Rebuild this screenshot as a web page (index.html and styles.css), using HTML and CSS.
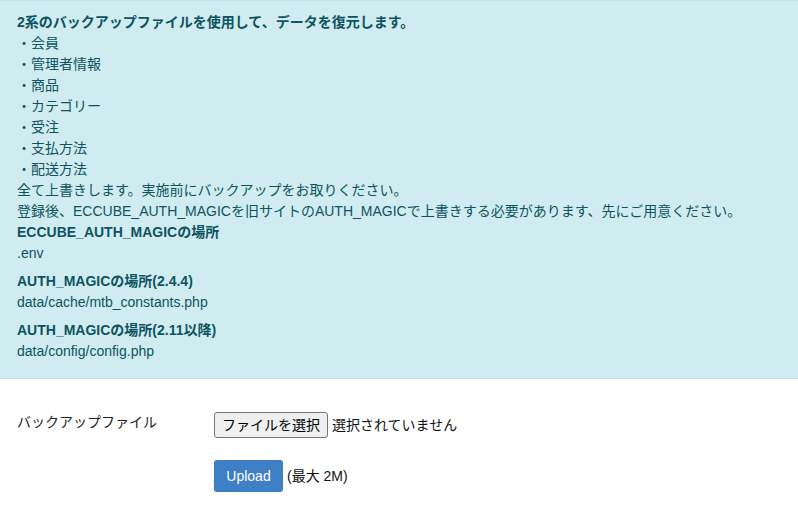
FILE: index.html
```html
<!DOCTYPE html>
<html lang="ja">

<head>
    <meta charset="UTF-8">
    <meta name="viewport" content="width=device-width, initial-scale=1.0">
    <title>バックアップ復元</title>

    <link rel="stylesheet" href="styles.css">
</head>

<body>
    <div class="alert-info">
        <div class="title">2系のバックアップファイルを使用して、データを復元します。</div>
        <div>・会員</div>
        <div>・管理者情報</div>
        <div>・商品</div>
        <div>・カテゴリー</div>
        <div>・受注</div>
        <div>・支払方法</div>
        <div>・配送方法</div>
        <div>全て上書きします。実施前にバックアップをお取りください。</div>
        <div>登録後、ECCUBE_AUTH_MAGICを旧サイトのAUTH_MAGICで上書きする必要があります、先にご用意ください。</div>
        <dl>
            <dt>ECCUBE_AUTH_MAGICの場所</dt>
            <dd>.env</dd>
            <dt>AUTH_MAGICの場所(2.4.4)</dt>
            <dd>data/cache/mtb_constants.php</dd>
            <dt>AUTH_MAGICの場所(2.11以降)</dt>
            <dd>data/config/config.php</dd>
        </dl>
    </div>

    <form id="upload" class="upload-form">
        <div class="form-row">
            <label for="backup">バックアップファイル</label>
            <div class="file-field">
                <label class="file-btn" for="backup">ファイルを選択</label>
                <span class="file-name">選択されていません</span>
                <input type="file" id="backup" name="backupFile">
            </div>
        </div>
        <div class="form-row">
            <div></div>
            <div class="submit-field">
                <button type="submit" class="btn-primary">Upload</button>
                <span class="note">(最大 2M)</span>
            </div>
        </div>
    </form>
</body>

</html>
```

FILE: styles.css
```css
body {
    font-family: "Liberation Sans", "Noto Sans CJK JP", sans-serif;
    font-size: 14px;
    line-height: 21px;
    color: #333;
    background-color: #fff;
    margin: 0;
    padding: 0;
}

.alert-info {
    background-color: #d1ecf1;
    border-top: 1px solid #bee5eb;
    border-bottom: 1px solid #bee5eb;
    color: #0c5460;
    padding: 11px 17px 9px;
}

.title {
    font-weight: bold;
}

dl {
    margin: 0;
}

dt {
    font-weight: bold;
}

dd {
    margin: 0 0 7px 0;
}

.upload-form {
    padding: 33px 17px 0;
}

.form-row {
    display: grid;
    grid-template-columns: 197px 1fr;
    margin-bottom: 22px;
}

.form-row > label {
    color: #222;
}

.file-field {
    display: flex;
    align-items: center;
    gap: 4px;
    color: #111;
}

.file-field input[type="file"] {
    display: none;
}

.file-btn {
    display: inline-block;
    height: 26px;
    box-sizing: border-box;
    padding: 0 7px;
    line-height: 24px;
    font-size: 14px;
    color: #000;
    background-color: #efefef;
    border: 1px solid #767676;
    border-radius: 3px;
    cursor: pointer;
}

.submit-field {
    display: flex;
    align-items: center;
    gap: 4px;
    color: #111;
}

.btn-primary {
    height: 32px;
    width: 69px;
    padding: 0;
    font-family: inherit;
    font-size: 14px;
    color: #fff;
    background-color: #3f7fc6;
    border: none;
    border-radius: 3px;
    cursor: pointer;
}
```
